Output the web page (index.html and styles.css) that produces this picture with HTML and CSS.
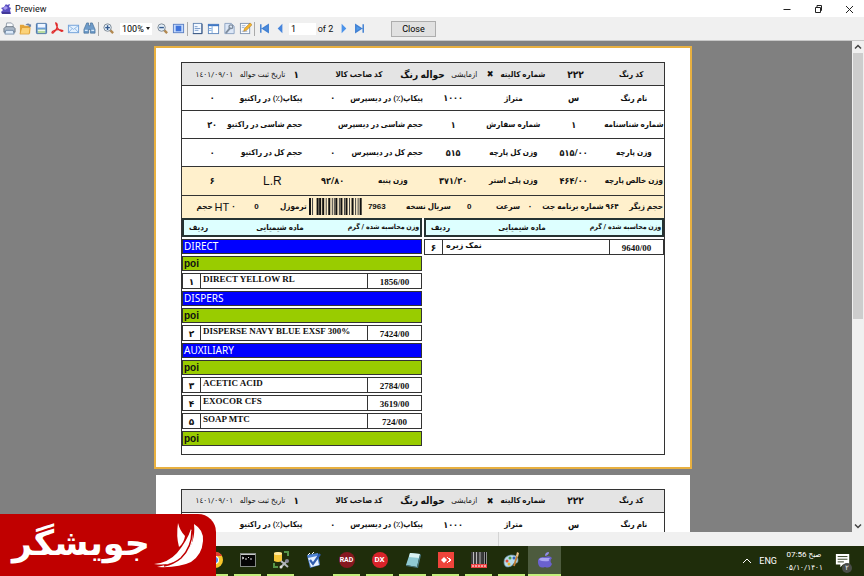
FILE: index.html
```html
<!DOCTYPE html>
<html lang="fa">
<head>
  <meta charset="UTF-8" />
  <meta name="viewport" content="width=device-width, initial-scale=1.0"/>
  <title>Preview</title>
  <link rel="stylesheet" href="styles.css">
</head>
<body>

<header class="titlebar">
  <svg class="app-icon" viewBox="0 0 12 12"><path d="M6 1l1 1 3-1-1 3 2 1-1 2 1 4H2l-1-2 2-2-2-2 3-1z" fill="#5a4fc0"/><path d="M3 5l3-2 2 2-3 2z" fill="#a79cf0"/><path d="M2 10h8" stroke="#2a2570"/></svg>
  <span class="title">Preview</span>
  <div class="window-buttons">
    <button aria-label="Minimize"><svg viewBox="0 0 10 10"><path d="M1.500 5.500h7" stroke="#222"/></svg></button>
    <button aria-label="Restore"><svg viewBox="0 0 10 10"><path d="M2.500 3.500h5v5h-5zM4 3.500v-2h4.500v5H8" fill="none" stroke="#222"/></svg></button>
    <button aria-label="Close window"><svg viewBox="0 0 10 10"><path d="M2 2l7 7M9 2l-7 7" stroke="#222"/></svg></button>
  </div>
</header>

<div class="toolbar">
  <button class="tool" aria-label="Print"><svg viewBox="0 0 14 14"><path d="M4 1h5l2 2v4H3z" fill="#f6f9fd" stroke="#7a8796" stroke-width=".8"/><path d="M1 7l2-2h8l2 2v4H1z" fill="#aab7c6" stroke="#536170" stroke-width=".8"/><path d="M3 9h8l1 4H2z" fill="#dceafa" stroke="#5c7898" stroke-width=".8"/></svg></button>
  <button class="tool" aria-label="Open"><svg viewBox="0 0 14 14"><path d="M1 3h4l1 1h6v8H1z" fill="#e3a53a"/><path d="M3 6h9l-1 7H1z" fill="#fbd279" stroke="#d79528" stroke-width=".7"/><path d="M7 3q3-3 5 0l1-1v3h-3l1-1" fill="#6b83a8"/></svg></button>
  <button class="tool" aria-label="Save"><svg viewBox="0 0 14 14"><rect x="1.500" y="1.500" width="11" height="11" rx="1" fill="#6f9fd8" stroke="#446d9f"/><path d="M3 2h8v4H3z" fill="#eef6ff"/><path d="M3 8h8v4H3z" fill="#b8dba0"/><path d="M3 9h8" stroke="#fff"/></svg></button>
  <button class="tool" aria-label="Export to PDF"><svg viewBox="0 0 14 14"><path d="M5 1q3 1 1 6-1 3-4 5-2 0 0-2 4-3 10-1 2 1-1 1-4-1-6-9" fill="none" stroke="#e02a2a" stroke-width="1.300" stroke-linecap="round"/></svg></button>
  <button class="tool" aria-label="E-mail"><svg viewBox="0 0 14 14"><rect x="1.500" y="3.500" width="11" height="8" fill="#e3f1ff" stroke="#6e9fd8"/><path d="M2 4l5 4 5-4M2 11l3.500-4M12 11L8.500 7" fill="none" stroke="#8eb5e3"/></svg></button>
  <button class="tool" aria-label="Find"><svg viewBox="0 0 14 14"><path d="M4 1h2v3h2V1h2l3 7v4H8V8H6v4H1V8z" fill="#6e9bc9" stroke="#416a94" stroke-width=".7"/><path d="M2 9h3M9 9h3" stroke="#d6e9fb" stroke-width="1.500"/></svg></button>
  <span class="separator"></span>
  <button class="tool" aria-label="Zoom in"><svg viewBox="0 0 14 14"><path d="M8 8l4 4" stroke="#b2884f" stroke-width="2.500"/><circle cx="6" cy="6" r="4" fill="#e2edf7" stroke="#7b8793"/><path d="M3.500 6h5M6 3.500v5" stroke="#345a8e" stroke-width="1.500"/></svg></button>
  <label class="zoom-box"><select aria-label="Zoom"><option>100%</option></select></label>
  <button class="tool" aria-label="Zoom out"><svg viewBox="0 0 14 14"><path d="M8 8l4 4" stroke="#b2884f" stroke-width="2.500"/><circle cx="6" cy="6" r="4" fill="#e2edf7" stroke="#7b8793"/><path d="M3.500 6h5" stroke="#345a8e" stroke-width="1.500"/></svg></button>
  <button class="tool" aria-label="Full screen"><svg viewBox="0 0 14 14"><rect x="1.500" y="2.500" width="11" height="9" fill="#c5dafb" stroke="#5a7fc4"/><rect x="4" y="4" width="6" height="6" fill="#3f74dc"/></svg></button>
  <span class="separator"></span>
  <button class="tool" aria-label="Outline"><svg viewBox="0 0 14 14"><rect x="2.500" y="1.500" width="9" height="11" fill="#f2f8ff" stroke="#6485b3"/><path d="M4 5h3M4 7h6M4 9h4" stroke="#7899ca"/><path d="M2 12.500h10V2" fill="none" stroke="#38547f"/></svg></button>
  <button class="tool" aria-label="Thumbnails"><svg viewBox="0 0 14 14"><rect x="1.500" y="2.500" width="11" height="10" fill="#fff" stroke="#5f87bd"/><path d="M1 3.500h12" stroke="#3f77c4" stroke-width="2"/><path d="M5.500 4v8M2 7h3M2 9h3" stroke="#79a6dc"/></svg></button>
  <button class="tool" aria-label="Page settings"><svg viewBox="0 0 14 14"><path d="M2 1.500h7l3 3v8H2z" fill="#dce7f7" stroke="#8ca2c1"/><path d="M3 12l5-6" stroke="#7f8d9e" stroke-width="2"/><circle cx="8.500" cy="5" r="2" fill="none" stroke="#7f8d9e" stroke-width="1.400"/></svg></button>
  <button class="tool" aria-label="Edit page"><svg viewBox="0 0 14 14"><rect x="1.500" y="1.500" width="10" height="11" fill="#fafcff" stroke="#8296b1"/><path d="M3 4h4M3 6h3M3 10h6" stroke="#9cb1ce"/><path d="M5 10l1-3 6-6 2 2-6 6z" fill="#f4b52d" stroke="#aa7324" stroke-width=".6"/></svg></button>
  <span class="separator"></span>
  <button class="tool" aria-label="First page"><svg viewBox="0 0 14 14"><path d="M3 2.500v9M11 3v8L5 7z" fill="#4f8ede" stroke="#4281d3" stroke-width="1.600"/></svg></button>
  <button class="tool" aria-label="Previous page"><svg viewBox="0 0 14 14"><path d="M9 2v10L4 7z" fill="#4685dc"/></svg></button>
  <input class="page-number" type="text" value="1" aria-label="Page">
  <span class="page-count">of 2</span>
  <button class="tool" aria-label="Next page"><svg viewBox="0 0 14 14"><path d="M5 2v10l5-5z" fill="#4b93ea"/></svg></button>
  <button class="tool" aria-label="Last page"><svg viewBox="0 0 14 14"><path d="M11 2.500v9M3 3v8l6-4z" fill="#4f9bea" stroke="#4281d3" stroke-width="1.600"/></svg></button>
  <button class="close-button">Close</button>
</div>

<div class="viewer">
  <main class="pages">
    <section class="sheet current">
      <div class="report" dir="rtl">
        <div class="report-title">
          <span>کد رنگ</span><span class="number">۲۲۲</span><span>شماره کالیته</span><span class="mark">✖</span><span class="light">ازمایشی</span><span class="big">حواله رنگ</span><span>کد صاحب کالا</span><span class="number">۱</span><span class="light">تاریخ ثبت حواله</span><span class="light">١٤٠١/٠٩/٠١</span>
        </div>
        <table class="details">
          <tr><th>نام رنگ</th><td>س</td><th>متراژ</th><td>۱۰۰۰</td><th>پیکاپ(٪) در دیسپرس</th><td>۰</td><th>پیکاپ(٪) در راکتیو</th><td>۰</td></tr>
          <tr class="tall"><th>شماره شناسنامه</th><td>۱</td><th>شماره سفارش</th><td>۱</td><th>حجم شاسی در دیسپرس</th><td></td><th>حجم شاسی در راکتیو</th><td>۲۰</td></tr>
          <tr class="tall"><th>وزن پارچه</th><td>۵۱۵/۰۰</td><th>وزن کل پارچه</th><td>۵۱۵</td><th>حجم کل در دیسپرس</th><td>۰</td><th>حجم کل در راکتیو</th><td>۰</td></tr>
          <tr class="tall cream"><th>وزن خالص پارچه</th><td>۴۶۴/۰۰</td><th>وزن پلی استر</th><td>۳۷۱/۲۰</td><th>وزن پنبه</th><td>۹۲/۸۰</td><td class="latin">L.R</td><td>۶</td></tr>
        </table>
        <div class="machine">
          <span>حجم زیگر</span><span>۹۶۴ شماره برنامه جت</span><span>۰</span><span>سرعت</span><span class="latin">0</span><span>سریال نسخه</span><span class="latin serial">7963</span>
          <svg class="barcode" viewBox="0 0 52 17" preserveAspectRatio="none"><path d="M1 0v17M8.500 0v17M11 0v17M14 0v17M20 0v17M27 0v17M32 0v17M37 0v17M43 0v17M51 0v17" stroke="#111" stroke-width="2"/><path d="M3.500 0v17M17 0v17M23 0v17M25 0v17M30 0v17M35 0v17M40 0v17M46 0v17M48.500 0v17" stroke="#444"/></svg>
          <span>ترموزل</span><span class="latin">0</span><span class="volume">۰ <b>HT</b> حجم</span>
        </div>
        <div class="recipe">
          <table class="materials">
            <thead><tr><th class="weight">وزن محاسبه شده / گرم</th><th>ماده شیمیایی</th><th class="row-number">ردیف</th></tr></thead>
          </table>
          <table class="materials">
            <thead><tr><th class="weight">وزن محاسبه شده / گرم</th><th>ماده شیمیایی</th><th class="row-number">ردیف</th></tr></thead>
          </table>
          <table class="items" dir="ltr">
            <colgroup><col class="row-number"><col><col class="weight"></colgroup>
            <tr><td class="row-number">۶</td><td class="name" dir="rtl"><span class="persian">نمک زبره</span></td><td class="weight">9640/00</td></tr>
          </table>
          <table class="items" dir="ltr">
            <colgroup><col class="row-number"><col><col class="weight"></colgroup>
            <tr class="group"><td colspan="3">DIRECT</td></tr>
            <tr class="step"><td colspan="3">poi</td></tr>
            <tr><td class="row-number">۱</td><td class="name">DIRECT YELLOW RL</td><td class="weight">1856/00</td></tr>
            <tr class="group"><td colspan="3">DISPERS</td></tr>
            <tr class="step"><td colspan="3">poi</td></tr>
            <tr><td class="row-number">۲</td><td class="name">DISPERSE NAVY BLUE EXSF 300%</td><td class="weight">7424/00</td></tr>
            <tr class="group"><td colspan="3">AUXILIARY</td></tr>
            <tr class="step"><td colspan="3">poi</td></tr>
            <tr><td class="row-number">۳</td><td class="name">ACETIC ACID</td><td class="weight">2784/00</td></tr>
            <tr><td class="row-number">۴</td><td class="name">EXOCOR CFS</td><td class="weight">3619/00</td></tr>
            <tr><td class="row-number">۵</td><td class="name">SOAP MTC</td><td class="weight">724/00</td></tr>
            <tr class="step"><td colspan="3">poi</td></tr>
          </table>
        </div>
      </div>
    </section>

    <section class="sheet">
      <div class="report" dir="rtl">
        <div class="report-title">
          <span>کد رنگ</span><span class="number">۲۲۲</span><span>شماره کالیته</span><span class="mark">✖</span><span class="light">ازمایشی</span><span class="big">حواله رنگ</span><span>کد صاحب کالا</span><span class="number">۱</span><span class="light">تاریخ ثبت حواله</span><span class="light">١٤٠١/٠٩/٠١</span>
        </div>
        <table class="details">
          <tr><th>نام رنگ</th><td>س</td><th>متراژ</th><td>۱۰۰۰</td><th>پیکاپ(٪) در دیسپرس</th><td>۰</td><th>پیکاپ(٪) در راکتیو</th><td></td></tr>
        </table>
      </div>
    </section>
  </main>
  <div class="scrollbar">
    <button aria-label="Scroll up"><svg viewBox="0 0 10 10"><path d="M2 6.500l3-3 3 3" fill="none" stroke="#444" stroke-width="1.500"/></svg></button>
    <div class="track"><div class="thumb"></div></div>
    <button aria-label="Scroll down"><svg viewBox="0 0 10 10"><path d="M2 3.500l3 3 3-3" fill="none" stroke="#444" stroke-width="1.500"/></svg></button>
  </div>
</div>

<div class="statusbar"><span></span><span></span></div>

<footer class="taskbar">
  <button class="task" aria-label="Chrome"><svg viewBox="0 0 18 18"><circle cx="9" cy="9" r="8" fill="#f7c52b"/><path d="M2 5a8 8 0 0 1 14 0H9L6 11z" fill="#e2402e"/><path d="M2 5l5 8 2 4A8 8 0 0 1 2 5" fill="#3da751"/><circle cx="9" cy="9" r="4" fill="#fff"/><circle cx="9" cy="9" r="3" fill="#4285f4"/></svg></button>
  <button class="task" aria-label="Command prompt"><svg viewBox="0 0 18 18"><rect x="1.500" y="2.500" width="15" height="13" fill="#050505" stroke="#858b86"/><path d="M2 3.500h14" stroke="#c7cbc8"/><path d="M3 6l2 1-2 1M6 8h2M9 6l1 1M11 8h2" stroke="#ddd" fill="none"/></svg></button>
  <button class="task" aria-label="Database tools"><svg viewBox="0 0 18 18"><path d="M2 2q4-2 8 0v8q-4 2-8 0z" fill="#f5c739"/><ellipse cx="6" cy="2.500" rx="4" ry="1.500" fill="#ffeaa0"/><path d="M12 1h4v4M2 12v4h4" fill="none" stroke="#569448" stroke-width="2"/><path d="M9 10l7 6M9 16l6-6" stroke="#b3b8bc" stroke-width="2"/><circle cx="9" cy="16" r="1.500" fill="#ddd"/><circle cx="15" cy="10" r="2" fill="#889"/></svg></button>
  <button class="task idle" aria-label="Tasks"><svg viewBox="0 0 18 18"><path d="M2 4l11-2 2 12-10 3z" fill="#4f83d1"/><path d="M3 7l9-2 2 9-8 2z" fill="#e6f1ff"/><path d="M5 9l3 4 7-10" fill="none" stroke="#2e5cae" stroke-width="2.200"/><path d="M3 4l2-2M7 3l2-2" stroke="#fff"/></svg></button>
  <button class="task" aria-label="RAD Studio"><span class="badge dark">RAD</span></button>
  <button class="task" aria-label="DevExpress"><span class="badge">DX</span></button>
  <button class="task" aria-label="Notepad"><svg viewBox="0 0 18 18"><path d="M6 2l10 1-3 13-11-2z" fill="#8fc9d3"/><path d="M6 2l10 1-1 4L5 6z" fill="#d9f1f2"/><path d="M2 14l11 2 3-13 1 1-3 13-12-2z" fill="#477681"/></svg></button>
  <button class="task" aria-label="AnyDesk"><svg viewBox="0 0 18 18"><rect x="1" y="1" width="16" height="16" fill="#ef443b"/><path d="M7 6l3 3-3 3-3-3z" fill="#fff"/><path d="M10 6l3 3-3 3M12 7l2 2-2 2" fill="none" stroke="#fff"/></svg></button>
  <button class="task" aria-label="Barcode"><svg viewBox="0 0 18 18"><rect x="1" y="1" width="16" height="13" fill="#bbb"/><path d="M2 1v13M5 1v13M8 1v13M12 1v13M15.500 1v13" stroke="#111" stroke-width="1.500"/><path d="M10 1v13M13.500 1v13" stroke="#333"/><rect x="1" y="13" width="16" height="4" fill="#ee4141"/><path d="M2 15h14" stroke="#fff" stroke-dasharray="2 1"/></svg></button>
  <button class="task" aria-label="Paint"><svg viewBox="0 0 18 18"><path d="M1 11Q1 5 8 4q7 0 7 5 0 4-4 3-2 4-6 4-4 0-4-5" fill="#b9dcec" stroke="#6b95a9" stroke-width=".7"/><circle cx="4" cy="10" r="1.500" fill="#e14f37"/><circle cx="7" cy="7" r="1.500" fill="#4a9c48"/><circle cx="11" cy="7" r="1.500" fill="#3262bc"/><circle cx="6" cy="13" r="1.500" fill="#e9b82e"/><path d="M11 15l3-10" stroke="#c27b32" stroke-width="1.800"/><path d="M13 5l1-4 2 1-1 4z" fill="#edc48f"/></svg></button>
  <button class="task active" aria-label="Preview"><svg viewBox="0 0 18 18"><path d="M9 6q5-2 7 1-3 3 0 6-2 5-7 3-6 2-7-4-1-7 7-6" fill="#6a61ce"/><path d="M3 9q1-3 5-2 4 0 6 0-2 2-1 3-6 1-10-1" fill="#aaa5f1"/><path d="M9 5q0-4 4-4 0 3-4 4" fill="#918be8"/></svg></button>
  <div class="tray">
    <button aria-label="Hidden icons"><svg viewBox="0 0 10 10"><path d="M1 7l4-4 4 4" fill="none" stroke="#fff"/></svg></button>
    <span class="language">ENG</span>
    <div class="clock"><span dir="ltr">07:56 صبح</span><span dir="ltr">۰۵/۱۰/۱۴۰۱</span></div>
    <button class="notifications" aria-label="Notifications"><svg viewBox="0 0 18 18"><path d="M1 1h15v12H9l-3 3v-3H1z" fill="#fff"/><path d="M3 4h11M3 7h11M3 10h7" stroke="#243011"/></svg><span class="count">۲</span></button>
  </div>
</footer>

<div class="brand">
  <span dir="rtl">جویشگر</span>
  <svg viewBox="0 0 50 48"><path d="M40 3Q50 9 49 20 48 34 37 41 25 47 3 46 20 43 30 34 42 22 40 3z" fill="#fff"/><path d="M0 43Q14 42 23 32 33 20 37 8 42 22 31 34 19 46 0 43z" fill="#fff"/><path d="M38 10Q38 26 27 37 20 43 10 45" fill="none" stroke="#c00000" stroke-width="1.500"/><path d="M24 2Q26 10 31 15 30 22 25 26 22 15 24 2z" fill="#fff"/></svg>
</div>

</body>
</html>
```
FILE: styles.css
```css
* {
  box-sizing: border-box;
}

body {
  margin: 0;
  height: 100vh;
  display: flex;
  flex-direction: column;
  overflow: hidden;
  background-color: #f0f0f0;
  color: #111;
  font-family: Roboto, "DejaVu Sans Condensed", "DejaVu Sans", sans-serif;
  font-size: 8px;
}

button {
  display: flex;
  align-items: center;
  justify-content: center;
  padding: 0;
  border: none;
  background: none;
  font-family: inherit;
}

svg {
  display: block;
}

/* Title bar and toolbar */
.titlebar {
  display: flex;
  align-items: center;
  height: 17px;
  background-color: #fff;
}

.app-icon {
  width: 12px;
  height: 12px;
}

.title {
  margin-left: 3px;
  font-size: 9px;
}

.window-buttons {
  display: flex;
  margin-left: auto;
}

.window-buttons button {
  width: 31px;
}

.window-buttons svg,
.scrollbar svg,
.tray svg {
  width: 10px;
  height: 10px;
}

.toolbar {
  display: flex;
  align-items: center;
  height: 24px;
  padding-left: 1px;
  border-bottom: 1px solid #c8c8c8;
}

.tool {
  width: 16px;
}

.tool svg {
  width: 13px;
  height: 13px;
}

.separator {
  width: 1px;
  height: 14px;
  margin: 0 1px;
  background-color: #aaa;
}

.zoom-box {
  display: flex;
  align-items: center;
  width: 32px;
  height: 12px;
  margin: 0 2px 0 4px;
  background-color: #fff;
}

.zoom-box::after {
  content: "";
  border: 2px solid transparent;
  border-top: 3px solid #222;
  border-bottom: none;
}

.zoom-box select {
  width: 26px;
  padding: 0 2px;
  border: none;
  background: none;
  appearance: none;
  font-family: inherit;
  font-size: 9px;
}

.page-number {
  width: 27px;
  height: 12px;
  margin-left: 1px;
  padding: 0 2px;
  border: none;
  font-family: inherit;
  font-size: 9px;
}

.page-count {
  width: 19px;
  font-size: 9px;
  text-align: center;
}

.close-button {
  width: 45px;
  height: 16px;
  margin-left: 24px;
  border: 1px solid #adadad;
  background-color: #e1e1e1;
  font-size: 9px;
}

/* Page viewer */
.viewer {
  display: flex;
  flex: 1;
  min-height: 0;
}

.pages {
  flex: 1;
  padding: 5px 6px 0 0;
  overflow: hidden;
  background-color: #808080;
}

.sheet {
  width: 538px;
  max-width: 100%;
  margin: 0 auto 4px;
  padding: 14px 25px 12px;
  border: 2px solid transparent;
  background-color: #fff;
  background-clip: padding-box;
}

.sheet.current {
  border-color: #e8b040;
}

.report {
  border: 1px solid #333;
}

.report-title,
.machine {
  display: grid;
  align-items: center;
  height: 22px;
  text-align: center;
  white-space: nowrap;
}

.report-title > *,
.machine > * {
  display: flex;
  justify-content: center;
  min-width: 0;
}

.report-title {
  grid-template-columns: 66fr 46fr 60fr 6fr 46fr 38fr 90fr 36fr 32fr 65fr;
  background-color: #e4e4e4;
  font-weight: bold;
}

.report-title .number,
.report-title .big {
  font-size: 10px;
}

.report-title .light {
  font-weight: normal;
}

.mark {
  font-size: 9px;
}

.details {
  width: 100%;
  border-collapse: collapse;
  table-layout: fixed;
}

.details th,
.details td {
  height: 25px;
  padding: 0;
  border-top: 1px solid #333;
  font-weight: bold;
  text-align: center;
  white-space: nowrap;
}

.details td {
  font-size: 9px;
}

.details .tall th,
.details .tall td {
  height: 28px;
}

.cream,
.machine {
  background-color: #fff0cc;
}

.details .latin {
  font-family: "Liberation Sans", sans-serif;
  font-size: 12px;
  font-weight: normal;
}

.machine {
  grid-template-columns: 36fr 96fr 6fr 38fr 40fr 42fr 46fr 53fr 32fr 42fr 54fr;
  height: 23px;
  border-top: 1px solid #333;
  font-weight: bold;
}

.machine .latin {
  font-family: "Liberation Sans", sans-serif;
}

.machine .serial {
  justify-content: flex-end;
  padding-left: 6px;
}

.machine .barcode {
  width: 100%;
  height: 17px;
}

.machine .volume {
  align-items: center;
  justify-content: flex-start;
  gap: 2px;
}

.volume b {
  font-family: "Liberation Sans", sans-serif;
  font-size: 11px;
  font-weight: normal;
}

.recipe {
  display: grid;
  grid-template-columns: 1fr 1fr;
  column-gap: 2px;
  align-items: start;
  padding-bottom: 6px;
}

.materials {
  width: 100%;
  height: 19px;
  border: 2px solid #263333;
  border-collapse: collapse;
  background-color: #dff;
  table-layout: fixed;
}

.materials th {
  padding: 0;
  white-space: nowrap;
}

.materials .weight {
  width: 74px;
  font-size: 7px;
}

.materials .row-number {
  width: 30px;
}

.items {
  width: 100%;
  border-spacing: 0 2px;
  table-layout: fixed;
  font-family: "Liberation Serif", "DejaVu Sans", serif;
  font-size: 9px;
  font-weight: bold;
  line-height: 11px;
}

.items td {
  height: 16px;
  padding: 0 2px;
  border: 1px solid #333;
  vertical-align: bottom;
}

.items td + td {
  border-left: none;
}

.items .row-number {
  width: 19px;
  text-align: center;
}

.items .name {
  vertical-align: top;
  white-space: nowrap;
}

.items .name[dir="rtl"] {
  text-align: left;
}

.items .weight {
  width: 54px;
  text-align: center;
}

.persian {
  font-size: 8px;
}

.items .group td,
.items .step td {
  height: 15px;
  padding: 0 1px;
  font-family: "Noto Sans", sans-serif;
  font-size: 10px;
  font-weight: normal;
  vertical-align: middle;
}

.items .group td {
  background-color: #00f;
  color: #fff;
}

.items .step td {
  background-color: #9c0;
  font-family: "Liberation Sans", sans-serif;
  font-weight: bold;
}

/* Scrollbar and status bar */
.scrollbar {
  display: flex;
  flex-direction: column;
  width: 12px;
}

.scrollbar button {
  width: 12px;
  height: 12px;
}

.track {
  flex: 1;
  padding: 0 1px;
}

.thumb {
  height: 57%;
  background-color: #cdcdcd;
}

.statusbar {
  display: grid;
  grid-template-columns: 498fr 366fr;
  height: 14px;
}

.statusbar span + span {
  border-left: 1px solid #d4d4d4;
}

/* Taskbar */
.taskbar {
  display: flex;
  height: 30px;
  padding-left: 198px;
  background-color: #1f2d0b;
  color: #fff;
}

.task {
  width: 33px;
  padding: 0 3px;
  flex-direction: column;
}

.task svg {
  width: 18px;
  height: 18px;
  margin: auto;
}

.task::after {
  content: "";
  width: 100%;
  height: 2px;
  background-color: #c3ee7c;
}

.task.idle::after {
  background: none;
}

.task.active {
  padding: 0;
  background-color: #4d5b3e;
}

.badge {
  width: 16px;
  height: 16px;
  margin: auto;
  border-radius: 50%;
  background-color: #d8232a;
  color: #fff;
  font-size: 8px;
  font-weight: bold;
  line-height: 16px;
}

.badge.dark {
  display: flex;
  justify-content: center;
  background-color: #861820;
  font-size: 7px;
}

.tray {
  display: flex;
  align-items: center;
  margin-left: auto;
  padding-right: 12px;
}

.language {
  margin: 0 8px 0 7px;
  font-size: 9px;
}

.clock {
  display: flex;
  flex-direction: column;
  align-items: center;
  width: 38px;
  margin-right: 11px;
  line-height: 13px;
  white-space: nowrap;
}

.notifications {
  position: relative;
  width: 18px;
}

.notifications svg {
  width: 16px;
  height: 16px;
}

.count {
  position: absolute;
  right: 0;
  bottom: -4px;
  width: 10px;
  height: 10px;
  border-radius: 50%;
  background-color: #4a4d48;
  color: #fff;
  font-size: 7px;
  line-height: 10px;
}

/* Brand mark over the lower left corner */
.brand {
  position: absolute;
  left: 0;
  bottom: 0;
  display: flex;
  align-items: center;
  justify-content: flex-end;
  gap: 4px;
  width: 216px;
  height: 62px;
  padding-right: 12px;
  border-top-right-radius: 18px;
  background-color: #c00000;
  color: #fff;
}

.brand span {
  padding-bottom: 4px;
  font-family: "DejaVu Sans", sans-serif;
  font-size: 35px;
  font-weight: bold;
  line-height: 48px;
}

.brand svg {
  width: 50px;
  height: 48px;
}
```
